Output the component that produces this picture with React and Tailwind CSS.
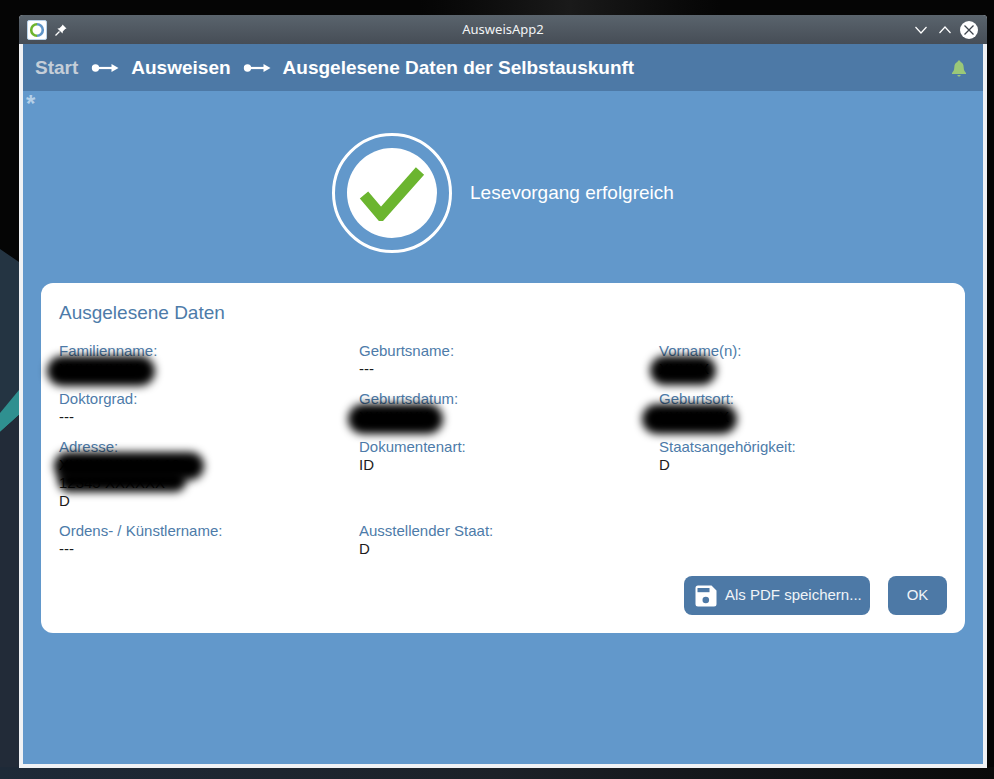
import React from "react";

function Arrow() {
  return (
    <svg width="28" height="10" viewBox="0 0 28 10" className="shrink-0">
      <circle cx="4.5" cy="5" r="3.7" fill="#fff" />
      <rect x="4" y="3.9" width="20" height="2.2" fill="#fff" />
      <path d="M20.5 1 L27.5 5 L20.5 9 Z" fill="#fff" />
    </svg>
  );
}

function Blob({ className }) {
  return <div className={"absolute bg-black rounded-full blur-[4px] " + className} />;
}

function Field({ label, children, className = "" }) {
  return (
    <div className={"text-[15px] leading-[18px] " + className}>
      <div className="text-[#4d7ba9]">{label}</div>
      <div className="text-[#1c1c1c]">{children}</div>
    </div>
  );
}

export default function App() {
  return (
    <div className="relative w-[994px] h-[779px] overflow-hidden bg-[#050505] font-['Liberation_Sans',Arial,sans-serif] pl-[19px] pt-[15px]">
      <div className="absolute left-[420px] top-0 w-[300px] h-[15px] bg-gradient-to-r from-[#050505] via-[#1a1a1a] to-[#050505]" />
      <svg className="absolute left-0 top-[240px]" width="19" height="539" viewBox="0 0 19 539">
        <path d="M0 9 L19 22 L19 175 L0 193 Z" fill="#243442" />
        <path d="M0 173 L19 150 L19 175 L0 192 Z" fill="#2f9090" />
        <path d="M0 192 L19 175 L19 539 L0 539 Z" fill="#222b38" />
      </svg>
      <div className="absolute left-0 right-0 bottom-0 h-3 bg-gradient-to-r from-[#1e2a38] via-[#1c2128] to-[#0a0a0a]" />

      <div className="relative flex flex-col w-[968px] h-[753px] rounded-t-[4px] overflow-hidden bg-[#f0f2f5]">
        <div className="flex items-center h-[29px] shrink-0 pl-2 pr-[9px] bg-gradient-to-b from-[#5a646d] to-[#464d56]">
          <div className="w-5 h-5 rounded-[2px] bg-white border border-[#b9d3ea] flex items-center justify-center shrink-0">
            <svg width="16" height="16" viewBox="0 0 16 16">
              <path d="M8 2.2 A5.8 5.8 0 0 0 8 13.8" fill="none" stroke="#6cb42f" strokeWidth="2.6" />
              <path d="M8 2.2 A5.8 5.8 0 0 1 8 13.8" fill="none" stroke="#5f95c9" strokeWidth="2.6" />
            </svg>
          </div>
          <svg width="14" height="14" viewBox="0 0 14 14" className="ml-[7px] shrink-0">
            <path d="M8.5 1.5 L12.5 5.5 L11.2 6 L8.8 8.6 L8.6 10.6 L3.4 5.4 L5.4 5.2 L8 2.8 Z" fill="#fff" />
            <path d="M5.5 8.5 L1.5 12.5" stroke="#fff" strokeWidth="1.2" />
          </svg>
          <div className="flex-1 text-center text-[13px] text-[#f2f4f5] pl-[24px] font-['Noto_Sans',sans-serif]">AusweisApp2</div>
          <svg width="14" height="10" viewBox="0 0 14 10" className="shrink-0 mr-[10px]">
            <path d="M1.5 2 L7 8 L12.5 2" fill="none" stroke="#fff" strokeWidth="1.2" />
          </svg>
          <svg width="14" height="10" viewBox="0 0 14 10" className="shrink-0 mr-[8px]">
            <path d="M1.5 8 L7 2 L12.5 8" fill="none" stroke="#fff" strokeWidth="1.2" />
          </svg>
          <div className="w-[18px] h-[18px] rounded-full bg-white flex items-center justify-center shrink-0">
            <svg width="12" height="12" viewBox="0 0 12 12">
              <path d="M1.5 1.5 L10.5 10.5 M10.5 1.5 L1.5 10.5" stroke="#3f464e" strokeWidth="1.3" />
            </svg>
          </div>
        </div>

        <div className="flex flex-col flex-1 px-1 pb-1 min-h-0">
          <div className="flex items-center h-[47px] shrink-0 bg-[#4d79a6] pl-3 pr-4 pt-px text-[19px] font-bold">
            <span className="text-[#c5ced8]">Start</span>
            <span className="ml-[13px] mr-[12px]"><Arrow /></span>
            <span className="text-white">Ausweisen</span>
            <span className="ml-[12px] mr-[12px]"><Arrow /></span>
            <span className="text-white">Ausgelesene Daten der Selbstauskunft</span>
            <svg width="16" height="17" viewBox="0 0 16 17" className="ml-auto">
              <path d="M8 0.5 C9 0.5 9.5 1.2 9.5 2 C11.8 2.8 12.6 4.8 12.7 7.5 C12.8 10 13.6 11.5 15 13 L15 14 L1 14 L1 13 C2.4 11.5 3.2 10 3.3 7.5 C3.4 4.8 4.2 2.8 6.5 2 C6.5 1.2 7 0.5 8 0.5 Z" fill="#9bc878" />
              <path d="M6.3 15 L9.7 15 C9.5 16.2 8.8 16.6 8 16.6 C7.2 16.6 6.5 16.2 6.3 15 Z" fill="#9bc878" />
            </svg>
          </div>

          <div className="relative flex-1 bg-[#6298cb] px-[18px]">
            <span className="absolute left-[3px] top-[-1px] text-[#b5d0e8] text-[24px] font-bold leading-[28px]">*</span>
            <div className="flex items-center pt-[42px] pl-[291px]">
              <div className="w-[120px] h-[120px] rounded-full border-[3px] border-white flex items-center justify-center shrink-0">
                <div className="w-[90px] h-[90px] rounded-full bg-white flex items-center justify-center">
                  <svg width="66" height="56" viewBox="0 0 66 56">
                    <path d="M5 30 L22 50 L61 6" fill="none" stroke="#6bb52f" strokeWidth="11" strokeLinejoin="miter" />
                  </svg>
                </div>
              </div>
              <span className="ml-[18px] text-white text-[19px]">Lesevorgang erfolgreich</span>
            </div>

            <div className="relative mt-[30px] w-[924px] h-[350px] bg-white rounded-[12px] px-[18px] pt-[18px]">
              <div className="text-[#4d7ba9] text-[19px] leading-[24px]">Ausgelesene Daten</div>
              <div className="grid grid-cols-[300px_300px_300px] mt-[17px]">
                <Field label="Familienname:" className="h-[47.5px]">XXXXXXXX</Field>
                <Field label="Geburtsname:" className="h-[47.5px]">---</Field>
                <Field label="Vorname(n):" className="h-[47.5px]">XXXXX</Field>
                <Field label="Doktorgrad:" className="h-[48px]">---</Field>
                <Field label="Geburtsdatum:" className="h-[48px]">XXXXXXX</Field>
                <Field label="Geburtsort:" className="h-[48px]">XXXXXXX</Field>
                <Field label="Adresse:" className="h-[84.5px]">
                  <div>XXXXXXXXXX 12</div>
                  <div>12345 XXXXXX</div>
                  <div>D</div>
                </Field>
                <Field label="Dokumentenart:" className="h-[84.5px]">ID</Field>
                <Field label="Staatsangehörigkeit:" className="h-[84.5px]">D</Field>
                <Field label="Ordens- / Künstlername:">---</Field>
                <Field label="Ausstellender Staat:">D</Field>
              </div>
              <div className="absolute right-[18px] bottom-[18px] flex gap-[18px]">
                <div className="flex items-center h-[39px] w-[186px] rounded-[8px] bg-[#4d79a6] text-[#f0f4f8] text-[15px] pl-[11px]">
                  <svg width="22" height="22" viewBox="0 0 22 22" className="shrink-0">
                    <path d="M3 0.5 L16.5 0.5 L21.5 5.5 L21.5 19 A2.5 2.5 0 0 1 19 21.5 L3 21.5 A2.5 2.5 0 0 1 0.5 19 L0.5 3 A2.5 2.5 0 0 1 3 0.5 Z" fill="#fff" />
                    <rect x="2.5" y="3" width="12" height="4.2" fill="#4d79a6" />
                    <circle cx="10.8" cy="15" r="3.3" fill="#4d79a6" />
                  </svg>
                  <span className="ml-[8px]">Als PDF speichern...</span>
                </div>
                <div className="flex items-center justify-center h-[39px] w-[59px] rounded-[8px] bg-[#4d79a6] text-[#f0f4f8] text-[15px]">OK</div>
              </div>
              <Blob className="left-[6px] top-[73px] w-[108px] h-[30px]" />
              <Blob className="left-[609px] top-[73px] w-[66px] h-[29px]" />
              <Blob className="left-[307px] top-[121px] w-[95px] h-[30px]" />
              <Blob className="left-[601px] top-[121px] w-[95px] h-[30px]" />
              <Blob className="left-[13px] top-[169px] w-[150px] h-[28px]" />
              <Blob className="left-[17px] top-[186px] w-[128px] h-[23px]" />
            </div>
          </div>
        </div>
      </div>
    </div>
  );
}
